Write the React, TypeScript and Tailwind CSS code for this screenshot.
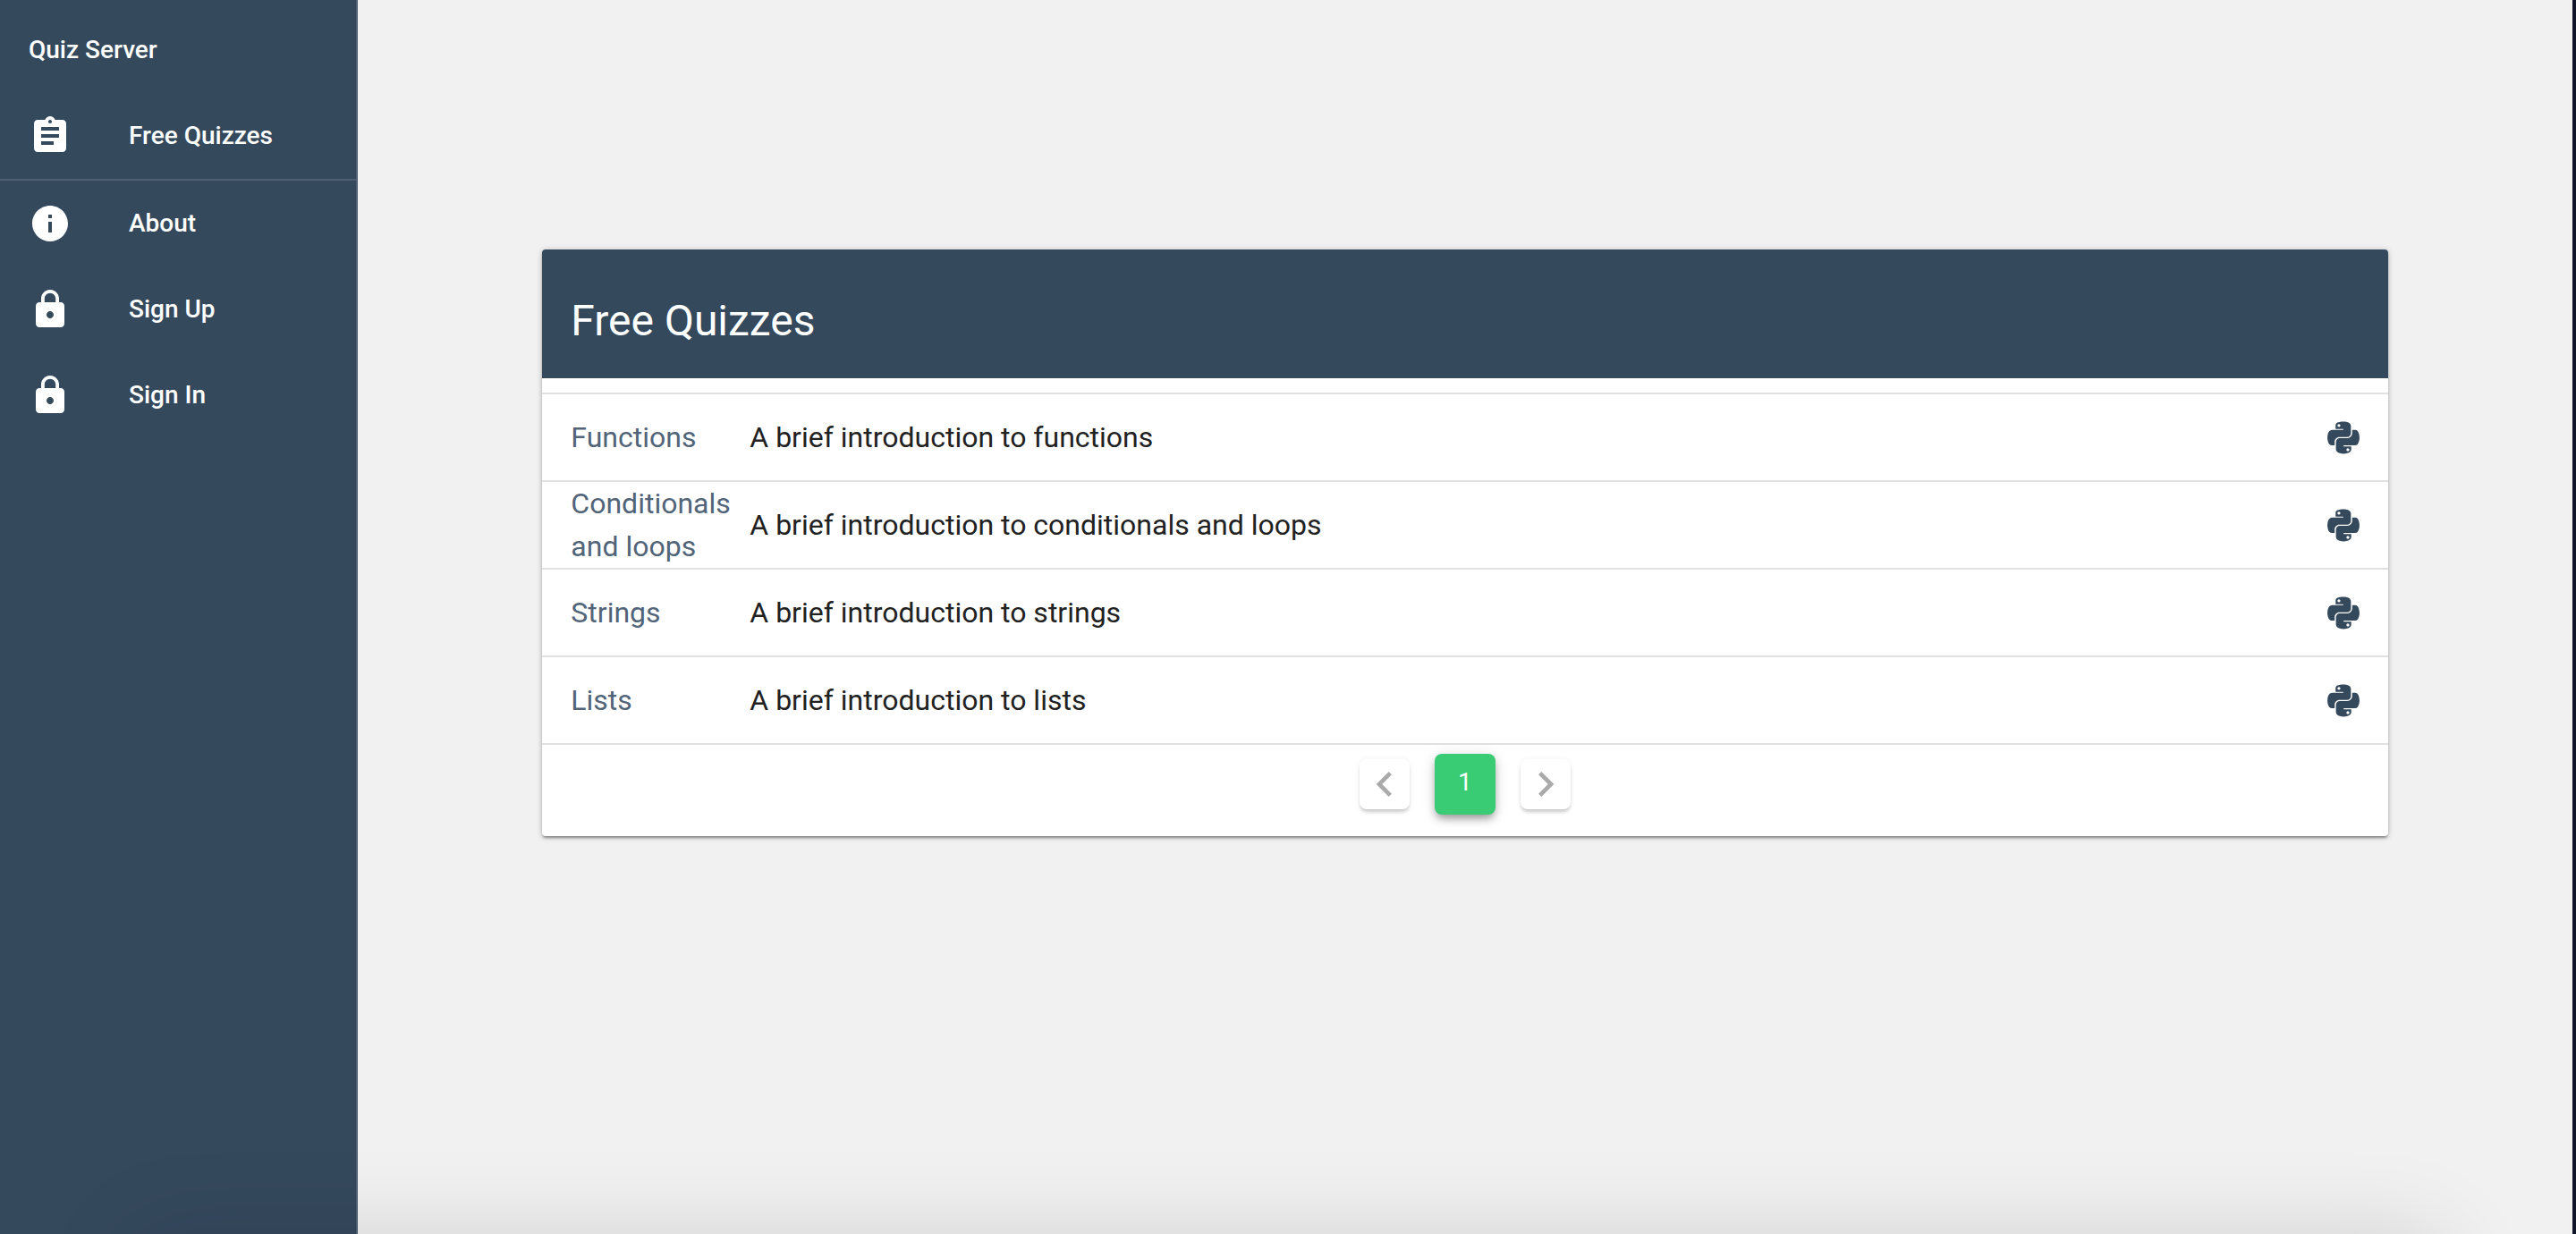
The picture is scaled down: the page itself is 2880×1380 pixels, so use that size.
import type { ReactNode } from "react";
import { MdAssignment, MdInfo, MdLock, MdChevronLeft, MdChevronRight } from "react-icons/md";
import { FaPython } from "react-icons/fa";

type Quiz = { name: string; description: string };

const quizzes: Quiz[] = [
  { name: "Functions", description: "A brief introduction to functions" },
  { name: "Conditionals and loops", description: "A brief introduction to conditionals and loops" },
  { name: "Strings", description: "A brief introduction to strings" },
  { name: "Lists", description: "A brief introduction to lists" },
];

function NavItem({ icon, label }: { icon: ReactNode; label: string }) {
  return (
    <li>
      <a href="#" className="flex h-24 items-center gap-16 px-8 text-[28px] leading-10 font-medium">
        <span className="text-[48px]">{icon}</span>
        {label}
      </a>
    </li>
  );
}

function Sidebar() {
  return (
    <nav className="w-[400px] shrink-0 border-r-2 border-[#4d5f71] bg-[#35495d] pt-2 text-white">
      <div className="flex h-24 items-center px-8 text-[28px] leading-10 font-medium">Quiz Server</div>
      <ul>
        <NavItem icon={<MdAssignment />} label="Free Quizzes" />
      </ul>
      <hr className="border-t-2 border-[#4d5f71]" />
      <ul>
        <NavItem icon={<MdInfo />} label="About" />
        <NavItem icon={<MdLock />} label="Sign Up" />
        <NavItem icon={<MdLock />} label="Sign In" />
      </ul>
    </nav>
  );
}

function QuizTable() {
  return (
    <table className="mt-4 w-full border-separate border-spacing-0 border-t-2 border-[#e0e0e0] text-[32px] leading-[48px]">
      <tbody>
        {quizzes.map((quiz) => (
          <tr key={quiz.name}>
            <td className="h-[98px] w-[232px] border-b-2 border-[#e0e0e0] pl-8">
              <a href="#" className="block text-[#516478]">
                {quiz.name}
              </a>
            </td>
            <td className="border-b-2 border-[#e0e0e0] text-[#212121]">{quiz.description}</td>
            <td className="border-b-2 border-[#e0e0e0] pr-8">
              <FaPython className="ml-auto h-[41px] w-9 text-[#35495d]" aria-label="Python" />
            </td>
          </tr>
        ))}
      </tbody>
    </table>
  );
}

function Pagination() {
  const arrow =
    "flex size-14 items-center justify-center rounded-lg bg-white text-[56px] text-[#aaaaaa] shadow-[0_4px_4px_-1px_rgba(0,0,0,0.2),0_0_6px_rgba(0,0,0,0.06)]";
  return (
    <div className="flex items-center justify-center gap-7 pt-2.5 pb-6">
      <button type="button" aria-label="Previous page" disabled className={arrow}>
        <MdChevronLeft className="shrink-0" />
      </button>
      <button
        type="button"
        aria-current="page"
        className="size-[68px] rounded-lg bg-[#3acc75] pb-1 text-[28px] text-white shadow-[0_6px_10px_-2px_rgba(0,0,0,0.35),0_2px_16px_rgba(0,0,0,0.14)]"
      >
        1
      </button>
      <button type="button" aria-label="Next page" disabled className={arrow}>
        <MdChevronRight className="shrink-0" />
      </button>
    </div>
  );
}

export default function App() {
  return (
    <div className="relative flex min-h-screen overflow-hidden bg-[#f1f1f1] font-[Roboto,sans-serif]">
      <Sidebar />
      <main className="flex-1 pt-[279px]">
        <section className="mx-auto w-10/12 rounded-sm bg-white shadow-[0_3px_3px_-1px_rgba(0,0,0,0.35),0_1px_6px_rgba(0,0,0,0.25)]">
          <header className="rounded-t-sm bg-[#35495d] px-8 pt-12 pb-8 text-white">
            <h1 className="text-[48px] leading-[64px]">Free Quizzes</h1>
          </header>
          <QuizTable />
          <Pagination />
        </section>
      </main>
      <div className="w-1 shrink-0 bg-[#101628]" />
      <div className="pointer-events-none absolute inset-x-36 top-full h-60 rounded-[40px] shadow-[0_0_100px_rgba(0,0,20,0.13)]" />
    </div>
  );
}
